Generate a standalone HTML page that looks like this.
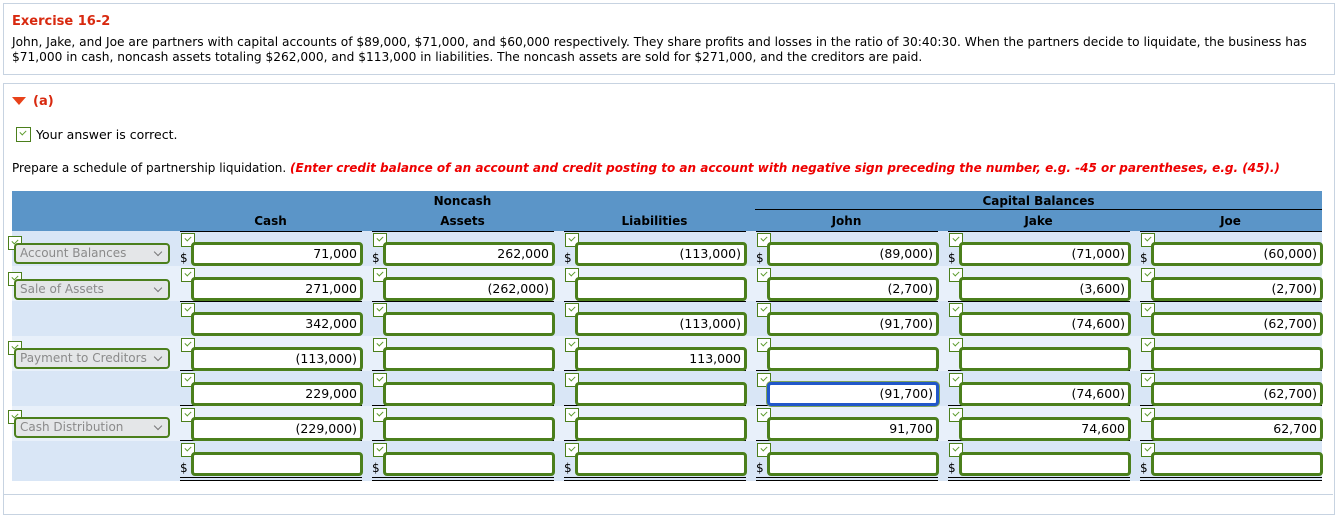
<!DOCTYPE html>
<html><head><meta charset="utf-8"><style>
body{margin:0;width:1340px;height:501px;overflow:hidden;background:#fff;font-family:"DejaVu Sans","Liberation Sans",sans-serif;font-size:12px;color:#000;position:relative}
.box{position:absolute;border:1px solid #c7d3e1;background:#fff}
.a{position:absolute;white-space:nowrap}
.hdr{position:absolute;left:12px;top:191px;width:1310px;height:40px;background:#5b95c8}
.hl{position:absolute;font-weight:bold;font-size:12px;text-align:center;width:183px}
.ul{position:absolute;height:0;border-top:1.5px solid #000}
.row{position:absolute;left:12px;width:1310px;height:35px}
.in{position:absolute;width:163px;height:18px;border:3px solid #4b7f1c;border-radius:4px;background:#fff;text-align:right;line-height:18px;padding-right:3px;font-size:12.5px;box-sizing:content-box}
.ck{position:absolute;width:12px;height:12px;border:1.5px solid #4b7f1c;background:#fff}
.ck:after{content:"";position:absolute;left:3px;top:2px;width:5px;height:3px;border-left:1.5px solid #5a9a2a;border-bottom:1.5px solid #5a9a2a;transform:rotate(-45deg)}
.sel{position:absolute;left:14px;width:148px;height:17px;border:2.5px solid #4b7f1c;border-radius:4px;background:#e4e6e8;color:#8a8a8a;font-size:12px;line-height:17px;padding-left:4px}
.sel:after{content:"";position:absolute;right:7px;top:4px;width:5px;height:5px;border-right:1.5px solid #777;border-bottom:1.5px solid #777;transform:rotate(45deg)}
.d{position:absolute;font-size:12px}
</style></head><body>
<div class="box" style="left:3px;top:3px;width:1330px;height:70px"></div>
<div class="a" style="left:12px;top:14px;color:#d8290f;font-weight:bold;font-size:13px">Exercise 16-2</div>
<div class="a" style="left:12px;top:35px;font-size:12.2px;line-height:15px">John, Jake, and Joe are partners with capital accounts of $89,000, $71,000, and $60,000 respectively. They share profits and losses in the ratio of 30:40:30. When the partners decide to liquidate, the business has<br>$71,000 in cash, noncash assets totaling $262,000, and $113,000 in liabilities. The noncash assets are sold for $271,000, and the creditors are paid.</div>
<div class="box" style="left:3px;top:83px;width:1330px;height:430px"></div>
<div class="a" style="left:12px;top:97px;width:0;height:0;border-left:7px solid transparent;border-right:7px solid transparent;border-top:8px solid #e8421a"></div>
<div class="a" style="left:33px;top:94px;color:#d8290f;font-weight:bold;font-size:13px">(a)</div>
<div class="ck" style="left:16px;top:127px;width:13px;height:13px"></div>
<div class="a" style="left:36px;top:127px;font-size:12.5px">Your answer is correct.</div>
<div class="a" style="left:12px;top:161px;font-size:12px">Prepare a schedule of partnership liquidation. <span style="color:#e00;font-weight:bold;font-style:italic">(Enter credit balance of an account and credit posting to an account with negative sign preceding the number, e.g. -45 or parentheses, e.g. (45).)</span></div>

<div class="hdr"></div>
<div class="hl" style="left:371px;top:194px">Noncash</div>
<div class="hl" style="left:947px;top:194px">Capital Balances</div>
<div class="ul" style="left:755px;top:209px;width:567px"></div>
<div class="hl" style="left:179px;top:214px">Cash</div>
<div class="hl" style="left:371px;top:214px">Assets</div>
<div class="hl" style="left:563px;top:214px">Liabilities</div>
<div class="hl" style="left:755px;top:214px">John</div>
<div class="hl" style="left:947px;top:214px">Jake</div>
<div class="hl" style="left:1139px;top:214px">Joe</div>

<div class="row" style="top:231px;background:#d9e6f6"></div>
<div class="row" style="top:266px;background:#e8f0fa"></div>
<div class="row" style="top:301px;background:#d9e6f6"></div>
<div class="row" style="top:336px;background:#e8f0fa"></div>
<div class="row" style="top:371px;background:#d9e6f6"></div>
<div class="row" style="top:406px;background:#e8f0fa"></div>
<div class="row" style="top:441px;background:#d9e6f6;height:40px"></div>

<div class="ul" style="left:180px;top:231px;width:182px"></div><div class="ul" style="left:372px;top:231px;width:182px"></div><div class="ul" style="left:564px;top:231px;width:182px"></div><div class="ul" style="left:756px;top:231px;width:182px"></div><div class="ul" style="left:948px;top:231px;width:182px"></div><div class="ul" style="left:1140px;top:231px;width:182px"></div>
<div class="ul" style="left:180px;top:301px;width:182px"></div><div class="ul" style="left:372px;top:301px;width:182px"></div><div class="ul" style="left:564px;top:301px;width:182px"></div><div class="ul" style="left:756px;top:301px;width:182px"></div><div class="ul" style="left:948px;top:301px;width:182px"></div><div class="ul" style="left:1140px;top:301px;width:182px"></div>
<div class="ul" style="left:180px;top:370px;width:182px"></div><div class="ul" style="left:372px;top:370px;width:182px"></div><div class="ul" style="left:564px;top:370px;width:182px"></div><div class="ul" style="left:756px;top:370px;width:182px"></div><div class="ul" style="left:948px;top:370px;width:182px"></div><div class="ul" style="left:1140px;top:370px;width:182px"></div>
<div class="ul" style="left:180px;top:405px;width:182px"></div><div class="ul" style="left:372px;top:405px;width:182px"></div><div class="ul" style="left:564px;top:405px;width:182px"></div><div class="ul" style="left:756px;top:405px;width:182px"></div><div class="ul" style="left:948px;top:405px;width:182px"></div><div class="ul" style="left:1140px;top:405px;width:182px"></div>
<div class="ul" style="left:180px;top:440px;width:182px"></div><div class="ul" style="left:372px;top:440px;width:182px"></div><div class="ul" style="left:564px;top:440px;width:182px"></div><div class="ul" style="left:756px;top:440px;width:182px"></div><div class="ul" style="left:948px;top:440px;width:182px"></div><div class="ul" style="left:1140px;top:440px;width:182px"></div>
<div class="ul" style="left:180px;top:477px;width:182px;border-bottom:1px solid #000;height:2px"></div><div class="ul" style="left:372px;top:477px;width:182px;border-bottom:1px solid #000;height:2px"></div><div class="ul" style="left:564px;top:477px;width:182px;border-bottom:1px solid #000;height:2px"></div><div class="ul" style="left:756px;top:477px;width:182px;border-bottom:1px solid #000;height:2px"></div><div class="ul" style="left:948px;top:477px;width:182px;border-bottom:1px solid #000;height:2px"></div><div class="ul" style="left:1140px;top:477px;width:182px;border-bottom:1px solid #000;height:2px"></div>

<div class="ck" style="left:8px;top:236px"></div><div class="sel" style="top:243px">Account Balances</div>
<div class="ck" style="left:8px;top:272px"></div><div class="sel" style="top:279px">Sale of Assets</div>
<div class="ck" style="left:8px;top:341px"></div><div class="sel" style="top:348px">Payment to Creditors</div>
<div class="ck" style="left:8px;top:410px"></div><div class="sel" style="top:417px">Cash Distribution</div>

<div class="ck" style="left:181px;top:233px"></div><div class="d" style="left:180px;top:251px">$</div><div class="in" style="left:191px;top:242px">71,000</div>
<div class="ck" style="left:373px;top:233px"></div><div class="d" style="left:372px;top:251px">$</div><div class="in" style="left:383px;top:242px">262,000</div>
<div class="ck" style="left:565px;top:233px"></div><div class="d" style="left:564px;top:251px">$</div><div class="in" style="left:575px;top:242px">(113,000)</div>
<div class="ck" style="left:757px;top:233px"></div><div class="d" style="left:756px;top:251px">$</div><div class="in" style="left:767px;top:242px">(89,000)</div>
<div class="ck" style="left:949px;top:233px"></div><div class="d" style="left:948px;top:251px">$</div><div class="in" style="left:959px;top:242px">(71,000)</div>
<div class="ck" style="left:1141px;top:233px"></div><div class="d" style="left:1140px;top:251px">$</div><div class="in" style="left:1151px;top:242px">(60,000)</div>

<div class="ck" style="left:181px;top:268px"></div><div class="in" style="left:191px;top:277px">271,000</div>
<div class="ck" style="left:373px;top:268px"></div><div class="in" style="left:383px;top:277px">(262,000)</div>
<div class="ck" style="left:565px;top:268px"></div><div class="in" style="left:575px;top:277px"></div>
<div class="ck" style="left:757px;top:268px"></div><div class="in" style="left:767px;top:277px">(2,700)</div>
<div class="ck" style="left:949px;top:268px"></div><div class="in" style="left:959px;top:277px">(3,600)</div>
<div class="ck" style="left:1141px;top:268px"></div><div class="in" style="left:1151px;top:277px">(2,700)</div>

<div class="ck" style="left:181px;top:303px"></div><div class="in" style="left:191px;top:312px">342,000</div>
<div class="ck" style="left:373px;top:303px"></div><div class="in" style="left:383px;top:312px"></div>
<div class="ck" style="left:565px;top:303px"></div><div class="in" style="left:575px;top:312px">(113,000)</div>
<div class="ck" style="left:757px;top:303px"></div><div class="in" style="left:767px;top:312px">(91,700)</div>
<div class="ck" style="left:949px;top:303px"></div><div class="in" style="left:959px;top:312px">(74,600)</div>
<div class="ck" style="left:1141px;top:303px"></div><div class="in" style="left:1151px;top:312px">(62,700)</div>

<div class="ck" style="left:181px;top:338px"></div><div class="in" style="left:191px;top:347px">(113,000)</div>
<div class="ck" style="left:373px;top:338px"></div><div class="in" style="left:383px;top:347px"></div>
<div class="ck" style="left:565px;top:338px"></div><div class="in" style="left:575px;top:347px">113,000</div>
<div class="ck" style="left:757px;top:338px"></div><div class="in" style="left:767px;top:347px"></div>
<div class="ck" style="left:949px;top:338px"></div><div class="in" style="left:959px;top:347px"></div>
<div class="ck" style="left:1141px;top:338px"></div><div class="in" style="left:1151px;top:347px"></div>

<div class="ck" style="left:181px;top:373px"></div><div class="in" style="left:191px;top:382px">229,000</div>
<div class="ck" style="left:373px;top:373px"></div><div class="in" style="left:383px;top:382px"></div>
<div class="ck" style="left:565px;top:373px"></div><div class="in" style="left:575px;top:382px"></div>
<div class="ck" style="left:757px;top:373px"></div><div class="in" style="left:767px;top:382px;border-color:#2157c9;box-shadow:0 0 0 1px #7ea35a">(91,700)</div>
<div class="ck" style="left:949px;top:373px"></div><div class="in" style="left:959px;top:382px">(74,600)</div>
<div class="ck" style="left:1141px;top:373px"></div><div class="in" style="left:1151px;top:382px">(62,700)</div>

<div class="ck" style="left:181px;top:408px"></div><div class="in" style="left:191px;top:417px">(229,000)</div>
<div class="ck" style="left:373px;top:408px"></div><div class="in" style="left:383px;top:417px"></div>
<div class="ck" style="left:565px;top:408px"></div><div class="in" style="left:575px;top:417px"></div>
<div class="ck" style="left:757px;top:408px"></div><div class="in" style="left:767px;top:417px">91,700</div>
<div class="ck" style="left:949px;top:408px"></div><div class="in" style="left:959px;top:417px">74,600</div>
<div class="ck" style="left:1141px;top:408px"></div><div class="in" style="left:1151px;top:417px">62,700</div>

<div class="ck" style="left:181px;top:443px"></div><div class="d" style="left:180px;top:461px">$</div><div class="in" style="left:191px;top:452px"></div>
<div class="ck" style="left:373px;top:443px"></div><div class="d" style="left:372px;top:461px">$</div><div class="in" style="left:383px;top:452px"></div>
<div class="ck" style="left:565px;top:443px"></div><div class="d" style="left:564px;top:461px">$</div><div class="in" style="left:575px;top:452px"></div>
<div class="ck" style="left:757px;top:443px"></div><div class="d" style="left:756px;top:461px">$</div><div class="in" style="left:767px;top:452px"></div>
<div class="ck" style="left:949px;top:443px"></div><div class="d" style="left:948px;top:461px">$</div><div class="in" style="left:959px;top:452px"></div>
<div class="ck" style="left:1141px;top:443px"></div><div class="d" style="left:1140px;top:461px">$</div><div class="in" style="left:1151px;top:452px"></div>
<div class="a" style="left:3px;top:494px;width:1330px;border-top:1px solid #c7d3e1"></div>
</body></html>
